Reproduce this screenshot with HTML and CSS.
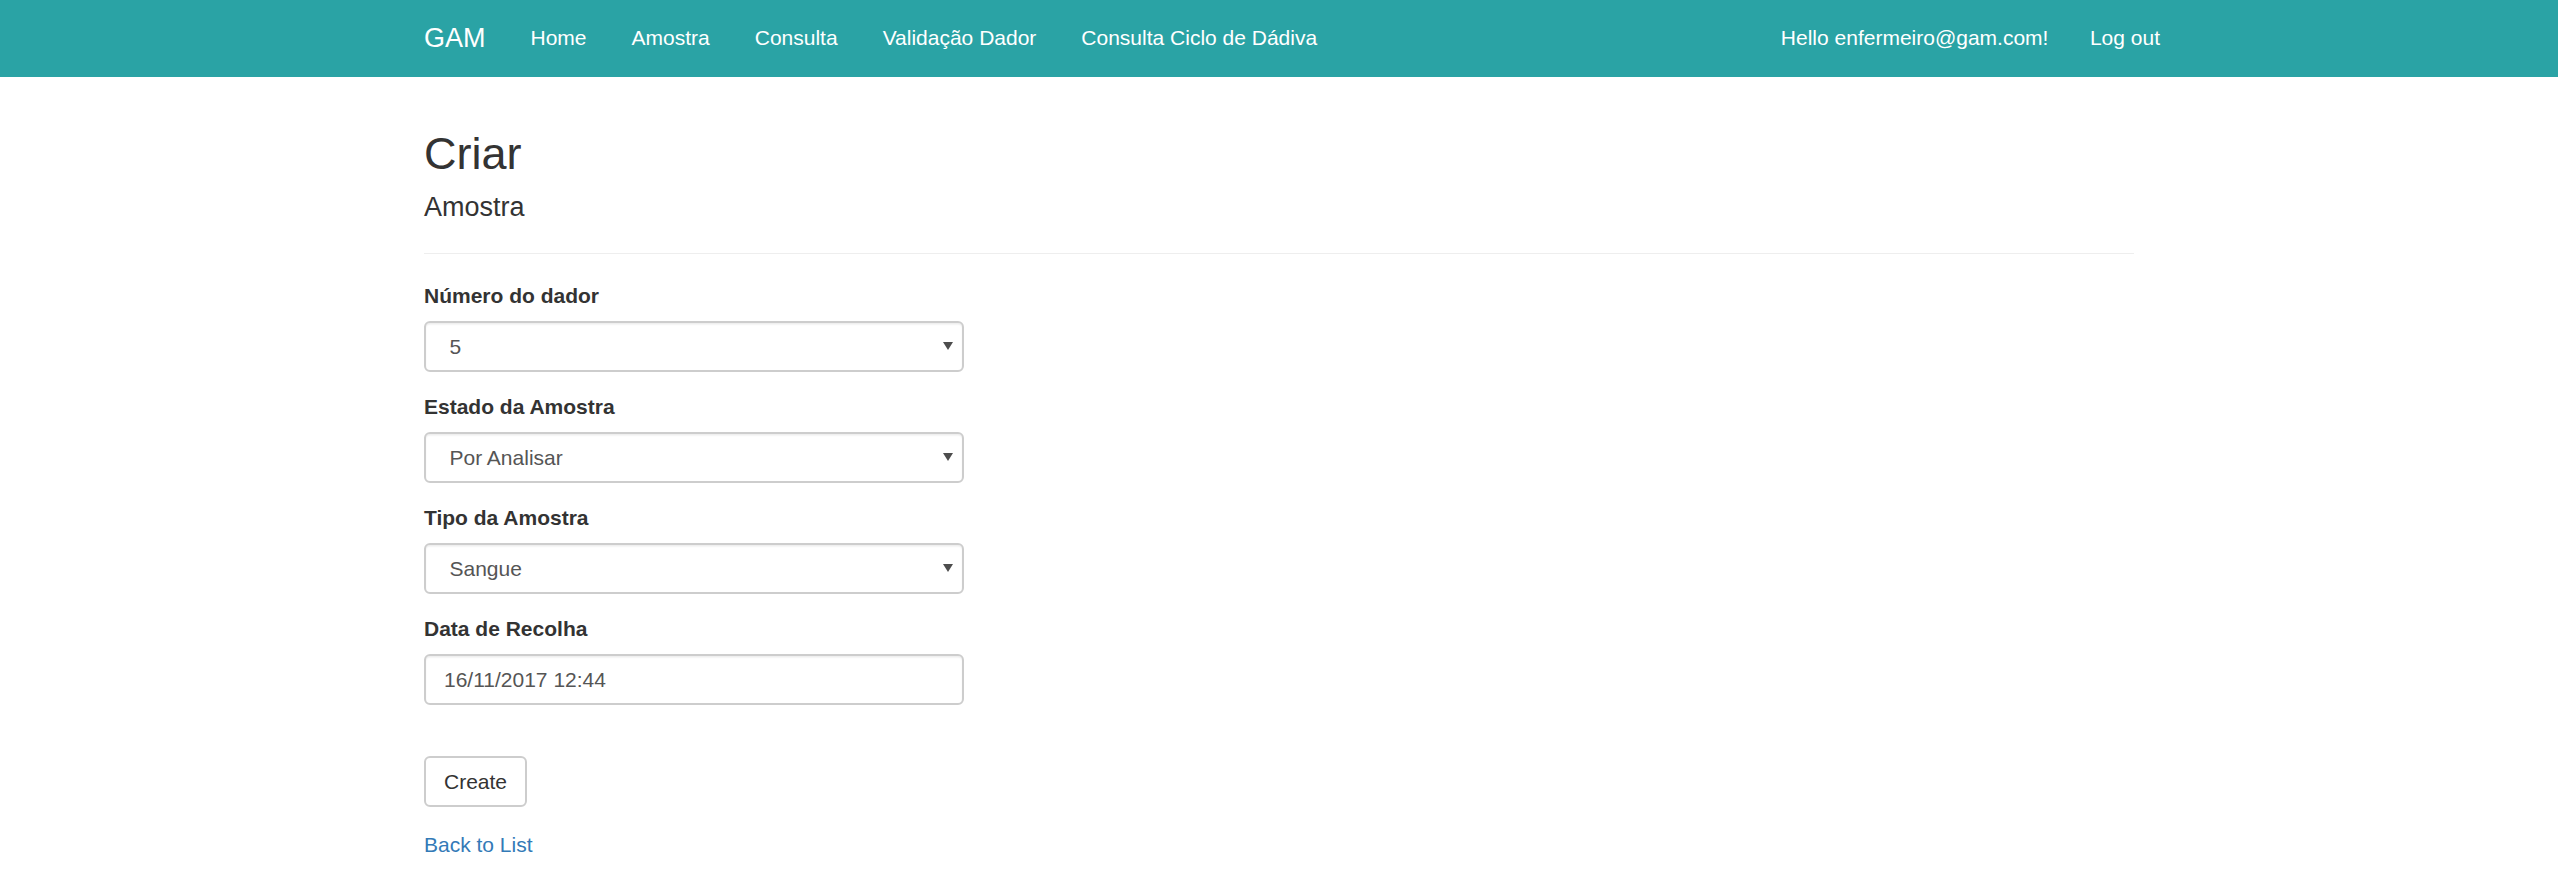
FILE: index.html
```html
<!DOCTYPE html>
<html lang="pt">
<head>
<meta charset="utf-8">
<title>Criar - GAM</title>
<link rel="stylesheet" href="styles.css">
</head>
<body>
<nav class="navbar">
  <div class="container nav-inner">
    <a class="brand" href="#">GAM</a>
    <ul class="nav">
      <li><a href="#">Home</a></li>
      <li><a href="#">Amostra</a></li>
      <li><a href="#">Consulta</a></li>
      <li><a href="#">Validação Dador</a></li>
      <li><a href="#">Consulta Ciclo de Dádiva</a></li>
    </ul>
    <ul class="nav nav-right">
      <li><a href="#">Hello enfermeiro@gam.com!</a></li>
      <li><button type="button" class="logout">Log out</button></li>
    </ul>
  </div>
</nav>
<main class="container page">
  <h2 class="title">Criar</h2>
  <h4 class="subtitle">Amostra</h4>
  <hr class="rule">
  <div class="form-col">
    <form>
      <div class="form-group">
        <label class="control-label">Número do dador</label>
        <div class="select-wrap">
          <select class="form-control select"><option>5</option></select>
        </div>
      </div>
      <div class="form-group">
        <label class="control-label">Estado da Amostra</label>
        <div class="select-wrap">
          <select class="form-control select"><option>Por Analisar</option></select>
        </div>
      </div>
      <div class="form-group">
        <label class="control-label">Tipo da Amostra</label>
        <div class="select-wrap">
          <select class="form-control select"><option>Sangue</option></select>
        </div>
      </div>
      <div class="form-group">
        <label class="control-label">Data de Recolha</label>
        <input class="form-control" type="text" value="16/11/2017 12:44">
      </div>
      <div class="form-group form-actions">
        <button type="button" class="btn">Create</button>
      </div>
    </form>
  </div>
  <div class="back"><a href="#">Back to List</a></div>
</main>
</body>
</html>
```

FILE: styles.css
```css
* { box-sizing: border-box; }
html, body {
  margin: 0;
  padding: 0;
  background: #fff;
}
body {
  font-family: "Liberation Sans", Arial, Helvetica, sans-serif;
  font-size: 21px;
  line-height: 30px;
  color: #333;
}
a { text-decoration: none; }

.container {
  width: 1755px;
  margin: 0 auto;
  padding: 0 22.5px;
}

.navbar {
  background: #2aa3a5;
  border-bottom: 1.5px solid #2aa3a5;
  height: 76.5px;
}
.nav-inner {
  display: flex;
  align-items: flex-start;
}
.brand {
  display: block;
  height: 75px;
  padding: 22.5px;
  margin-left: -22.5px;
  font-size: 27px;
  line-height: 30px;
  color: #fff;
}
.nav {
  display: flex;
  list-style: none;
  margin: 0;
  padding: 0;
}
.nav li a {
  display: block;
  padding: 22.5px;
  line-height: 30px;
  font-size: 21px;
  color: #fff;
}
.nav-right {
  margin-left: auto;
  margin-right: -45px;
}
.logout {
  display: block;
  margin-top: 12px;
  height: 51px;
  padding: 9px 18px;
  border: 1.5px solid transparent;
  background: transparent;
  font-family: inherit;
  font-size: 21px;
  line-height: 30px;
  color: #fff;
}

.page {
  padding-top: 22px;
  padding-bottom: 30px;
}
.title {
  margin: 30px 0 15px;
  font-size: 45px;
  line-height: 49.5px;
  font-weight: 500;
}
.subtitle {
  margin: 15px 0;
  font-size: 27px;
  line-height: 29.7px;
  font-weight: 500;
}
.rule {
  margin: 30px 0;
  border: 0;
  border-top: 1.5px solid #eee;
  height: 0;
}

.form-col { width: 540px; }
form { margin: 0; }
.form-group { margin-bottom: 22.5px; }
.control-label {
  display: block;
  width: fit-content;
  margin-bottom: 13.5px;
  font-weight: bold;
  line-height: 24px;
}
.form-control {
  display: block;
  width: 100%;
  height: 51px;
  padding: 9px 18px;
  font-family: inherit;
  font-size: 21px;
  line-height: 30px;
  color: #555;
  background: #fff;
  border: 2px solid #cdcdcd;
  border-radius: 6px;
  box-shadow: inset 0 1.5px 1.5px rgba(0,0,0,.075);
  outline: none;
}
.select-wrap { position: relative; }
.select {
  appearance: none;
  -webkit-appearance: none;
  padding-left: 23.5px;
  padding-right: 36px;
}
.select-wrap::after {
  content: "";
  position: absolute;
  right: 11px;
  top: 21px;
  width: 0;
  height: 0;
  border-left: 5px solid transparent;
  border-right: 5px solid transparent;
  border-top: 8px solid #4d4d4d;
  pointer-events: none;
}
.form-actions { margin-top: 51px; }
.btn {
  display: inline-block;
  height: 51px;
  padding: 9px 18px;
  font-family: inherit;
  font-size: 21px;
  line-height: 30px;
  color: #333;
  background: #fff;
  border: 2px solid #cdcdcd;
  border-radius: 6px;
}
.back a { color: #337ab7; }
```
